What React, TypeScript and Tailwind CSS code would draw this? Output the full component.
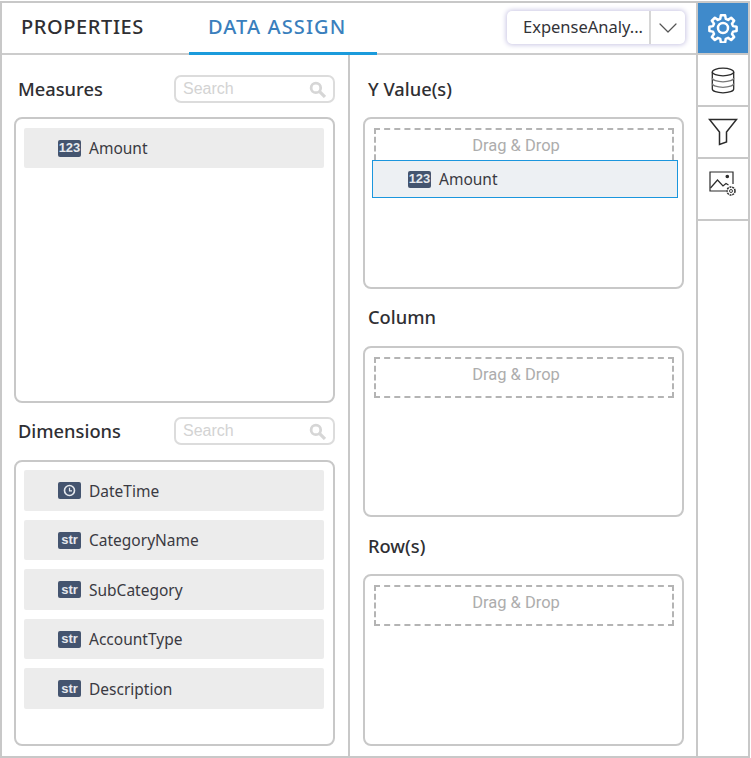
import { ReactNode } from "react";
import { ChevronDown } from "lucide-react";

const font = "font-['Noto_Sans','Open_Sans',sans-serif]";

function Badge({ children }: { children: ReactNode }) {
  return (
    <span className="flex h-[17px] w-[23px] shrink-0 items-center justify-center rounded-[2px] bg-[#44546f] font-['Liberation_Sans',sans-serif] text-[13px] font-bold text-[#e6e9ee]">
      {children}
    </span>
  );
}

function ClockBadge() {
  return (
    <Badge>
      <svg width="13" height="13" viewBox="0 0 13 13" fill="none" stroke="#e6e9ee">
        <circle cx="6.500" cy="6.500" r="5" strokeWidth="1.600" />
        <path d="M6.500 3.800V6.800H9" strokeWidth="1.200" />
      </svg>
    </Badge>
  );
}

function Field({ label, badge, h }: { label: string; badge: ReactNode; h: string }) {
  return (
    <div className={`flex items-center rounded-[2px] bg-[#ececec] pl-[34px] ${h}`}>
      {badge}
      <span className="ml-2 pt-[2px] text-[15.500px] text-[#3a3a42]">{label}</span>
    </div>
  );
}

function SearchBox() {
  return (
    <div className="flex h-[28px] w-[161px] items-center justify-between rounded-[7px] border-2 border-[#dcdcdc] pr-[7px] pl-[7px]">
      <span className="font-['Liberation_Sans',sans-serif] text-[16px] text-[#d3d3d3]">Search</span>
      <svg width="17" height="17" viewBox="0 0 16 16" fill="none" stroke="#d6d6d6" className="mt-[1px]">
        <circle cx="6.500" cy="6.500" r="4.500" strokeWidth="2.600" />
        <path d="M10 10L15 15" strokeWidth="3" />
      </svg>
    </div>
  );
}

function Heading({ children }: { children: ReactNode }) {
  return <h3 className="text-[18.300px] leading-[24px] font-medium text-[#2f2f33]">{children}</h3>;
}

function DropZone() {
  return (
    <div className="ml-[9px] flex h-[41px] w-[300px] items-center justify-center border-2 border-dashed border-[#b4b4b4] pr-[16px] pb-[5px] font-['Roboto',sans-serif] text-[16.500px] text-[#adadad]">
      Drag &amp; Drop
    </div>
  );
}

function DropPanel({ title, height, titleGap, children }: { title: string; height: string; titleGap: string; children?: ReactNode }) {
  return (
    <div>
      <div className={`pl-[18px] ${titleGap}`}>
        <Heading>{title}</Heading>
      </div>
      <div className={`ml-[13px] w-[321px] rounded-[8px] border-2 border-[#c8c8c8] pt-[9px] ${height}`}>
        <DropZone />
        {children}
      </div>
    </div>
  );
}

function GearIcon() {
  return (
    <svg width="30" height="30" viewBox="0 0 24 24" fill="none" stroke="#fff" strokeWidth="2" strokeLinejoin="round">
      <path d="M10.300 1.800h3.400l.5 2.900 1.900.8 2.400-1.700 2.400 2.400-1.700 2.400.8 1.900 2.900.5v3.400l-2.900.5-.8 1.900 1.700 2.400-2.400 2.400-2.400-1.700-1.900.8-.5 2.900h-3.400l-.5-2.900-1.900-.8-2.400 1.700-2.400-2.400 1.700-2.400-.8-1.900-2.900-.5v-3.400l2.900-.5.8-1.900-1.700-2.400 2.400-2.400 2.400 1.700 1.900-.8z" />
      <circle cx="12" cy="12" r="4" />
    </svg>
  );
}

function DataIcon() {
  return (
    <svg width="24" height="27" viewBox="0 0 24 27" fill="none" stroke="#2b2b2b" strokeWidth="1.300">
      <ellipse cx="12" cy="5" rx="10.700" ry="3.800" />
      <path d="M1.300 5v17c0 2.200 4.800 3.800 10.700 3.800s10.700-1.600 10.700-3.800V5" />
      <path d="M1.300 11c0 2.200 4.800 3.800 10.700 3.800S22.700 13.200 22.700 11" stroke="#777" />
      <path d="M1.300 16.500c0 2.200 4.800 3.800 10.700 3.800s10.700-1.600 10.700-3.800" stroke="#777" />
    </svg>
  );
}

function FilterIcon() {
  return (
    <svg width="30" height="28" viewBox="0 0 30 28" fill="none" stroke="#2b2b2b" strokeWidth="1.500" strokeLinejoin="miter">
      <path d="M1.500 1.500H28.500L18.500 14V24L11.500 26.500V14Z" />
    </svg>
  );
}

function ImageSettingsIcon() {
  return (
    <svg width="28" height="25" viewBox="0 0 28 25" fill="none" stroke="#2b2b2b" strokeWidth="1.200">
      <path d="M17 20H1V1H24V13" />
      <path d="M1.500 17L8.500 9L14 15L17 12.500L19.500 14" />
      <circle cx="18.300" cy="5.500" r="1.200" fill="#2b2b2b" />
      <circle cx="22" cy="20" r="4" strokeDasharray="2 0.800" strokeWidth="1.500" />
      <circle cx="22" cy="20" r="1.500" strokeWidth="0.900" />
    </svg>
  );
}

export default function App() {
  return (
    <div className={`${font} h-[758px] w-[751px] bg-white pt-[1px]`}>
      <div className="flex h-[757px] w-[750px] border-2 border-[#c8c8c8]">
        <div className="flex w-[696px] shrink-0 flex-col border-r-2 border-[#c8c8c8]">
          <header className="relative flex h-[52px] shrink-0 items-center border-b-2 border-[#cccccc] pb-[2px]">
            <span className="ml-[19px] text-[20px] font-medium tracking-[0.600px] text-[#2f2f33]">PROPERTIES</span>
            <span className="ml-[64px] text-[20px] font-medium tracking-[1.100px] text-[#3a7fbd]">DATA ASSIGN</span>
            <div className="absolute top-[49px] left-[187px] h-[3px] w-[188px] bg-[#1b9bdc]" />
            <div className="absolute top-[8px] left-[505px] flex h-[33px] w-[178px] items-center rounded-[5px] bg-white shadow-[0_0_5px_1px_#c9c6e4]">
              <span className="w-[142px] pl-[16px] text-[16.500px] whitespace-nowrap text-[#333338]">ExpenseAnaly...</span>
              <span className="flex h-full flex-1 items-center justify-center border-l-2 border-[#d6d6d6]">
                <ChevronDown size={32} strokeWidth={0.900} className="text-[#555]" />
              </span>
            </div>
          </header>

          <div className="flex flex-1">
            <div className="w-[348px] shrink-0 border-r-2 border-[#c8c8c8]">
              <div className="flex items-center justify-between pt-[20px] pr-[13px] pl-[16px]">
                <Heading>Measures</Heading>
                <SearchBox />
              </div>
              <div className="mt-[14px] ml-[12px] h-[286px] w-[321px] rounded-[8px] border-2 border-[#c8c8c8] pt-[9px] pl-[8px]">
                <div className="w-[300px]">
                  <Field label="Amount" h="h-[40px]" badge={<Badge>123</Badge>} />
                </div>
              </div>
              <div className="flex items-center justify-between pt-[14px] pr-[13px] pl-[16px]">
                <Heading>Dimensions</Heading>
                <SearchBox />
              </div>
              <div className="mt-[15px] ml-[12px] h-[286px] w-[321px] rounded-[8px] border-2 border-[#c8c8c8] pt-[8px] pl-[8px]">
                <div className="flex w-[300px] flex-col gap-[9px]">
                  <Field label="DateTime" h="h-[41px]" badge={<ClockBadge />} />
                  <Field label="CategoryName" h="h-[40px]" badge={<Badge>str</Badge>} />
                  <Field label="SubCategory" h="h-[41px]" badge={<Badge>str</Badge>} />
                  <Field label="AccountType" h="h-[40px]" badge={<Badge>str</Badge>} />
                  <Field label="Description" h="h-[41px]" badge={<Badge>str</Badge>} />
                </div>
              </div>
            </div>

            <div className="flex-1">
              <DropPanel title="Y Value(s)" height="h-[172px]" titleGap="pt-[22px] pb-[16px]">
                <div className="relative mt-[-9px] ml-[7px] flex h-[38px] w-[306px] items-center border border-[#1b96dd] bg-[#edf0f3] pl-[35px]">
                  <Badge>123</Badge>
                  <span className="ml-2 pt-[1px] text-[15.500px] text-[#3a3a42]">Amount</span>
                </div>
              </DropPanel>
              <DropPanel title="Column" height="h-[171px]" titleGap="pt-[16px] pb-[17px]" />
              <DropPanel title="Row(s)" height="h-[172px]" titleGap="pt-[17px] pb-[16px]" />
            </div>
          </div>
        </div>

        <aside className="flex flex-1 flex-col">
          <div className="flex h-[52px] items-center justify-center border-b-2 border-[#c8c8c8] bg-[#3f8acb]">
            <GearIcon />
          </div>
          <div className="flex h-[52px] items-center justify-center border-b-2 border-[#c8c8c8]">
            <DataIcon />
          </div>
          <div className="flex h-[52px] items-center justify-center border-b-2 border-[#c8c8c8]">
            <FilterIcon />
          </div>
          <div className="flex h-[62px] justify-center border-b-2 border-[#c8c8c8] pt-[12px]">
            <ImageSettingsIcon />
          </div>
        </aside>
      </div>
    </div>
  );
}
